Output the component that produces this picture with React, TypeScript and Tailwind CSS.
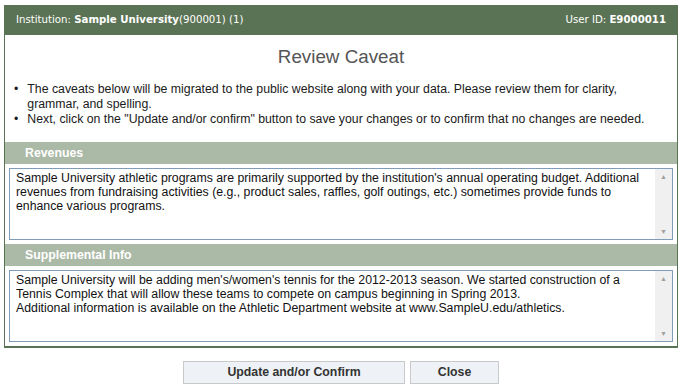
import React from "react"

const revenuesText =
    "Sample University athletic programs are primarily supported by the institution's annual operating budget. Additional revenues from fundraising activities (e.g., product sales, raffles, golf outings, etc.) sometimes provide funds to enhance various programs."

const supplementalText =
    "Sample University will be adding men's/women's tennis for the 2012-2013 season. We started construction of a Tennis Complex that will allow these teams to compete on campus beginning in Spring 2013.\nAdditional information is available on the Athletic Department website at www.SampleU.edu/athletics."

function FakeScrollbar() {
    return (
        <div className="flex w-[17px] shrink-0 flex-col items-center justify-between bg-[#f0f0f0] py-[4px] text-[7px] leading-none text-[#a0a0a0]">
            <span>▲</span>
            <span>▼</span>
        </div>
    )
}

function CaveatBox({ title, text }: { title: string; text: string }) {
    return (
        <div>
            <div className="flex h-[22px] items-center bg-[#abb9a7] pl-[20px] text-[12.3px] font-bold text-white">
                {title}
            </div>
            <div className="px-[4px] py-[4px]">
                <div className="flex h-[72px] border border-[#7f9db9] bg-white">
                    <textarea
                        readOnly
                        value={text}
                        className="flex-1 resize-none overflow-hidden px-[6px] pt-[2px] text-[12.3px] leading-[14px] text-[#111] outline-none"
                    />
                    <FakeScrollbar />
                </div>
            </div>
        </div>
    )
}

export default function App() {
    return (
        <div className="min-h-[392px] w-[682px] bg-white pt-[5px] font-['Liberation_Sans',Arial,sans-serif]">
            <div className="mx-[4px] w-[674px]">
                <div className="flex h-[30px] items-center justify-between bg-[#5b7355] px-[12px] font-['DejaVu_Sans',Verdana,sans-serif] text-[10.2px] text-white">
                    <span>
                        Institution: <b>Sample University</b>(900001) (1)
                    </span>
                    <span>
                        User ID: <b>E9000011</b>
                    </span>
                </div>
                <div className="border-x border-b-2 border-[#5b7355]">
                    <h1 className="pt-[10px] text-center text-[18.8px] leading-[24px] text-[#555]">
                        Review Caveat
                    </h1>
                    <ul className="mt-[13px] mb-[15px] pl-[9px] pr-[6px] text-[12.3px] leading-[15px] text-[#1a1a1a]">
                        <li className="flex gap-[9px]">
                            <span>•</span>
                            <span>
                                The caveats below will be migrated to the public website along with your data. Please review them for clarity, grammar, and spelling.
                            </span>
                        </li>
                        <li className="flex gap-[9px]">
                            <span>•</span>
                            <span>
                                Next, click on the "Update and/or confirm" button to save your changes or to confirm that no changes are needed.
                            </span>
                        </li>
                    </ul>
                    <CaveatBox title="Revenues" text={revenuesText} />
                    <CaveatBox title="Supplemental Info" text={supplementalText} />
                </div>
                <div className="mt-[13px] flex justify-center gap-[5px]">
                    <button className="h-[23px] w-[222px] border border-[#c9c9c9] bg-[#eef2f6] text-[12.3px] font-bold text-[#333]">
                        Update and/or Confirm
                    </button>
                    <button className="h-[23px] w-[89px] border border-[#c9c9c9] bg-[#eef2f6] text-[12.3px] font-bold text-[#333]">
                        Close
                    </button>
                </div>
            </div>
        </div>
    )
}
